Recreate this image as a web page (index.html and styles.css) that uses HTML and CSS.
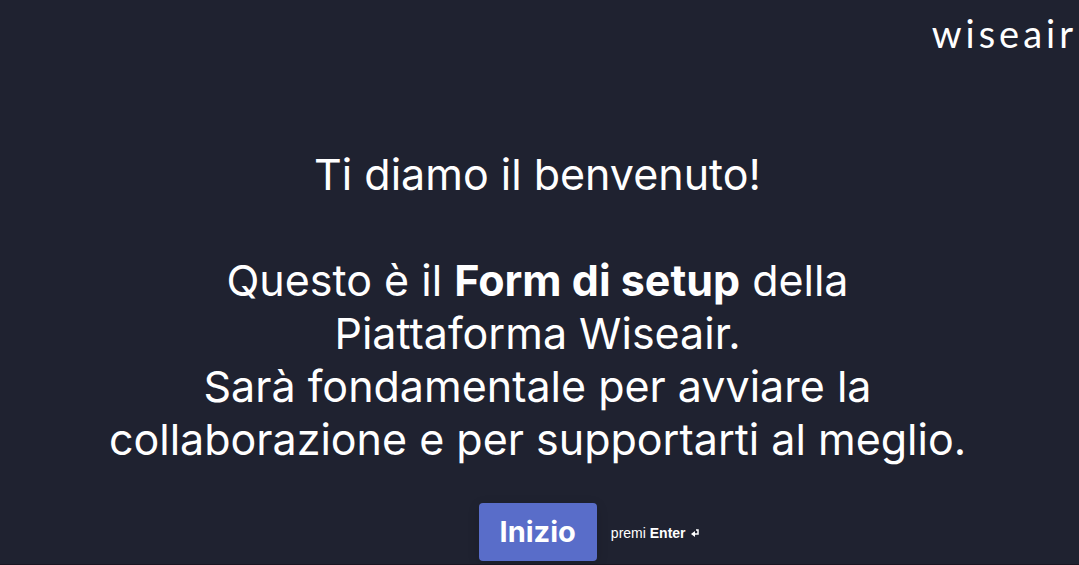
FILE: index.html
```html
<!DOCTYPE html>
<html lang="it">
<head>
<meta charset="utf-8">
<meta name="viewport" content="width=device-width, initial-scale=1">
<title>Form di setup</title>
<link rel="stylesheet" href="styles.css">
</head>
<body>
<header class="topbar"><span class="brand">wiseair</span></header>
<main class="welcome">
<h1 class="message">Ti diamo il benvenuto!<br><br>Questo è il <strong>Form di setup</strong> della<br>Piattaforma Wiseair.<br>Sarà fondamentale per avviare la collaborazione e per supportarti al meglio.</h1>
<div class="actions">
<button class="start" type="button">Inizio</button>
<span class="hint">premi <strong>Enter</strong>
<svg class="enter" viewBox="0 0 9 9" aria-hidden="true"><path d="M5 1h2v4H3" fill="none" stroke="currentColor" stroke-width="1.5"/><path d="M0 5l4-3v6z" fill="currentColor"/></svg></span>
</div>
</main>
</body>
</html>
```
FILE: styles.css
```css
* { box-sizing: border-box; }
body {
  margin: 0;
  min-height: 100vh;
  border-bottom: 1px solid #191622;
  background: #1f2230;
  color: #fff;
  font-family: Inter, "Liberation Sans", sans-serif;
}
.topbar {
  display: flex;
  justify-content: flex-end;
  height: 68px;
  padding: 10px 2px 0 0;
}
.brand {
  font-family: Lato, sans-serif;
  font-weight: 400;
  font-size: 38px;
  line-height: 46px;
  letter-spacing: 4px;
}
.welcome {
  display: flex;
  flex-direction: column;
  align-items: center;
  padding: 80px 102px 0 98px;
}
.message {
  margin: 0;
  max-width: 880px;
  font-size: 43px;
  line-height: 53px;
  font-weight: 400;
  text-align: center;
}
.message strong { font-weight: 700; }
.actions {
  display: flex;
  align-items: center;
  gap: 14px;
  margin-top: 37px;
  padding-left: 104px;
}
.start {
  padding: 0 21px;
  height: 58px;
  border: 0;
  border-radius: 4px;
  background: #596dc9;
  box-shadow: 0 3px 12px rgba(0, 0, 0, 0.15);
  color: #fff;
  font: 700 29px/58px Inter, sans-serif;
}
.hint {
  padding-top: 2px;
  font: 14px/20px "Liberation Sans", sans-serif;
}
.enter {
  width: 9px;
  height: 9px;
  margin-left: 2px;
}
```
